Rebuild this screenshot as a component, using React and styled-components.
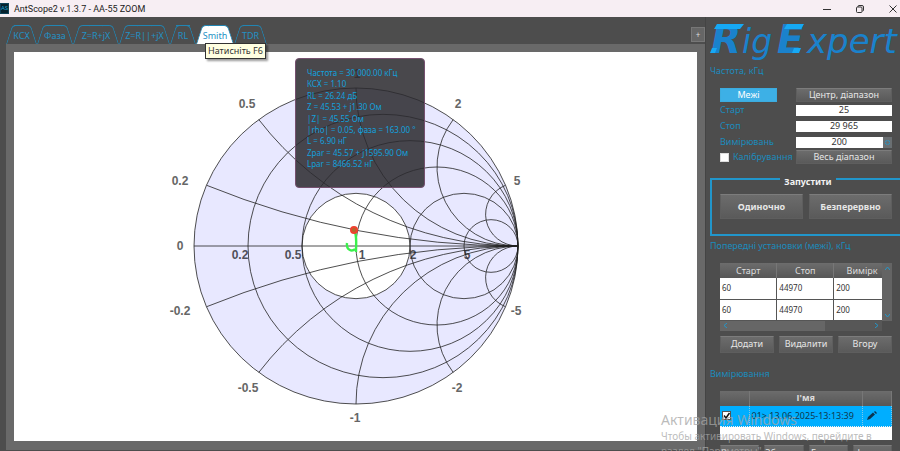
import React from 'react';
import styled, { createGlobalStyle } from 'styled-components';

const GlobalStyle = createGlobalStyle`
    * {
        box-sizing: border-box;
    }
    body {
        margin: 0;
        background: #4d4d4d;
        font-family: "Noto Sans", "Open Sans", sans-serif;
        font-size: 9px;
        line-height: 12px;
    }
    button, input {
        font: inherit;
        margin: 0;
    }
`
const Window = styled.div`
    display: flex;
    flex-direction: column;
    height: 100vh;
    overflow: hidden;
    position: relative;
`
const TitleBar = styled.header`
    display: flex;
    align-items: center;
    height: 17px;
    flex: none;
    background: #f7eef3;
    color: #222;
`
const AppIcon = styled.span`
    width: 9px;
    height: 11px;
    margin-right: 5px;
    background: #06222e;
    border: 1px solid #0e4258;
    color: #1aa5d8;
    font-size: 6px;
    line-height: 9px;
    text-align: center;
`
const Title = styled.h1`
    margin: 0;
    flex: 1;
    font-family: Roboto, sans-serif;
    font-size: 9px;
    font-weight: 400;
`
const WindowButton = styled.button`
    display: flex;
    justify-content: center;
    align-items: center;
    width: 33px;
    height: 17px;
    padding: 0;
    border: none;
    background: transparent;
    &:last-child {
        width: 34px;
        margin-right: -10px;
    }
`
const Body = styled.div`
    display: flex;
    flex: 1;
    min-height: 0;
`
const Main = styled.main`
    display: flex;
    flex-direction: column;
    flex: 1;
    min-width: 0;
    padding: 8px 0 1px 6px;
`
const TabBar = styled.nav`
    display: flex;
    height: 19px;
    flex: none;
`
const TabButton = styled.button`
    position: relative;
    z-index: 0;
    width: ${props => props.$width}px;
    padding: 2px 0 0;
    border: none;
    background: transparent;
    color: #2391c4;
    text-align: center;
    white-space: nowrap;
    &::before, &::after {
        content: "";
        position: absolute;
        z-index: -1;
        top: 0;
        bottom: 0;
        width: 51%;
        border-top: 1px solid #2185b3;
        background: ${props => props.$active ? '#fff' : 'transparent'};
        transform-origin: bottom;
    }
    &::before {
        left: 0;
        border-left: 1px solid #2185b3;
        border-top-left-radius: 4px;
        transform: skewX(-18deg);
    }
    &::after {
        right: 0;
        border-right: 1px solid #2185b3;
        border-top-right-radius: 4px;
        transform: skewX(18deg);
    }
`
const AddTab = styled.button`
    width: 14px;
    height: 15px;
    margin: 2px 0 0 auto;
    padding: 0;
    border: 1px solid #777;
    background: #666;
    color: #ddd;
    font-size: 8px;
    line-height: 12px;
`
const Frame = styled.section`
    display: flex;
    flex: 1;
    min-height: 0;
    padding: 8px 8px 9px;
    background: #696969;
`
const Canvas = styled.div`
    position: relative;
    flex: 1;
    background: #fff;
    svg {
        display: block;
        width: 100%;
        height: 100%;
    }
`
const Readout = styled.ul`
    position: absolute;
    left: 281px;
    top: 6px;
    width: 130px;
    height: 130px;
    display: flex;
    flex-direction: column;
    justify-content: space-between;
    margin: 0;
    padding: 8px 0 18px 11px;
    list-style: none;
    white-space: nowrap;
    background: rgba(43, 42, 46, 0.86);
    border: 1px solid #75506f;
    border-radius: 4px;
    color: #12a0dc;
    font-size: 8px;
    line-height: 11px;
`
const Tooltip = styled.div`
    position: absolute;
    left: 205px;
    top: 43px;
    padding: 1px 2px;
    background: #ffffe1;
    border: 1px solid #333;
    box-shadow: 2px 2px 2px rgba(0, 0, 0, 0.4);
    color: #333;
    font-size: 9px;
    white-space: nowrap;
`
const Side = styled.aside`
    width: 195px;
    flex: none;
    overflow: hidden;
    padding: 6px 8px 0 4px;
    border-left: 1px solid #444;
`
const Logo = styled.svg`
    display: block;
    width: 200px;
    height: 40px;
    overflow: visible;
`
const GroupTitle = styled.h2`
    margin: ${props => props.$top}px 0 0;
    color: #1b8bbd;
    font-size: 9px;
    font-weight: 400;
    line-height: 12px;
`
const RangeForm = styled.form`
    display: grid;
    grid-template-columns: 1fr 96px;
    grid-template-rows: 14px 16px 16px 16px 14px;
    align-items: center;
    margin: 11px 0 0 10px;
    color: #1b8bbd;
`
const Button = styled.button`
    height: ${props => props.$height || 14}px;
    padding: 0;
    overflow: hidden;
    border: 1px solid #5e5e5e;
    border-top-color: #7c7c7c;
    background: linear-gradient(#6c6c6c, #5a5a5a);
    color: #e6e6e6;
    font-weight: ${props => props.$bold ? 700 : 400};
    line-height: 12px;
    white-space: nowrap;
`
const ActiveButton = styled(Button)`
    width: 57px;
    border-color: #3cacdf;
    background: #3db0e6;
    color: #fff;
`
const NumberInput = styled.input`
    width: 100%;
    min-width: 0;
    height: 11px;
    padding: 0;
    border: none;
    border-radius: 0;
    background: #fff;
    color: #333;
    text-align: center;
`
const Spin = styled.div`
    display: flex;
    button {
        display: flex;
        align-items: center;
        width: 10px;
        height: 11px;
        padding: 0 2px;
        border: none;
        background: #6a6f72;
    }
`
const Calibration = styled.label`
    display: flex;
    align-items: center;
    gap: 4px;
    input {
        appearance: none;
        width: 9px;
        height: 9px;
        background: #fff;
        border: 1px solid #ddd;
    }
`
const Launch = styled.fieldset`
    display: grid;
    grid-template-columns: 83px 83px;
    gap: 6px;
    width: 196px;
    height: 66px;
    margin: 6px 0 0;
    padding: 6px 8px 0;
    border: 2px solid #2196cb;
    legend {
        margin: 0 auto;
        padding: 6px 4px 0;
        color: #f2f2f2;
        font-weight: 700;
        line-height: 12px;
    }
`
const PresetBox = styled.div`
    display: grid;
    grid-template-columns: 1fr 10px;
    margin: 11px 0 0 10px;
`
const PresetClip = styled.div`
    overflow: hidden;
    min-width: 0;
`
const Table = styled.table`
    width: ${props => props.$width};
    table-layout: fixed;
    border-collapse: collapse;
    color: #333;
    th {
        height: 15px;
        padding: 0;
        background: linear-gradient(#6c6c6c, #575757);
        border-right: 1px solid #777;
        color: #dcdcdc;
        font-weight: ${props => props.$bold ? 700 : 400};
        line-height: 12px;
    }
    td {
        height: 21px;
        padding: 0 2px;
        background: #fff;
        border-right: 1px solid #555;
        border-bottom: 1px solid #555;
        font-size: 8px;
    }
`
const VerticalBar = styled.div`
    display: flex;
    flex-direction: column;
    justify-content: space-between;
    align-items: center;
    padding: 3px 0;
    background: #646464;
`
const HorizontalBar = styled.div`
    display: flex;
    justify-content: space-between;
    align-items: center;
    height: 10px;
    padding: 0 3px;
    background: linear-gradient(90deg, #666 0 105px, #575757 105px);
`
const ButtonRow = styled.div`
    display: grid;
    grid-template-columns: repeat(${props => props.$count}, 1fr);
    gap: 5px;
    margin: ${props => props.$top}px 0 0 10px;
`
const Measurements = styled.div`
    margin: 11px 0 0 10px;
    height: 49px;
    background: #fff;
    td {
        background: #00aeff;
        border-right: 1px dotted #7fc8e8;
        border-bottom: 1px dotted #eee;
        color: #10394e;
        font-size: 9px;
    }
    td:last-child {
        padding-left: 4px;
    }
    td svg {
        display: block;
    }
    input {
        display: block;
        width: 9px;
        height: 9px;
        appearance: none;
        background: #fff;
        border: 1px solid #555;
    }
`
const CheckCell = styled.label`
    position: relative;
    display: block;
    width: 9px;
    svg {
        position: absolute;
        left: 0;
        top: 0;
    }
`
const Watermark = styled.div`
    position: absolute;
    left: 661px;
    top: 411px;
    color: rgba(165, 165, 165, 0.75);
    font-size: 10px;
    line-height: 15px;
    white-space: nowrap;
    pointer-events: none;
    strong {
        display: block;
        font-size: 14px;
        font-weight: 400;
        line-height: 18px;
    }
`

const TABS = [
    { name: 'КСХ', width: 31 },
    { name: 'Фаза', width: 36 },
    { name: 'Z=R+jX', width: 46 },
    { name: 'Z=R||+jX', width: 51 },
    { name: 'RL', width: 26 },
    { name: 'Smith', width: 38 },
    { name: 'TDR', width: 33 },
]

const READINGS = [
    'Частота = 30 000.00 кГц',
    'КСХ = 1.10',
    'RL = 26.24 дБ',
    'Z = 45.53 + j1.30 Ом',
    '|Z| = 45.55 Ом',
    '|rho| = 0.05, фаза = 163.00 °',
    'L = 6.90 нГ',
    'Zpar = 45.57 + j1595.90 Ом',
    'Lpar = 8466.52 нГ',
]

const CX = 342
const CY = 194
const RX = 162
const RY = 158
const VALUES = [0.2, 0.5, 1, 2, 5]

const RIM_LABELS = [
    ['0.5', 233, 56], ['1', 343, 26], ['2', 444, 56],
    ['0.2', 166, 133], ['5', 503, 133], ['0', 166, 198],
    ['-0.2', 166, 263], ['-5', 502, 263], ['-0.5', 234, 340],
    ['-2', 443, 340], ['-1', 341, 370],
]
const AXIS_LABELS = [
    ['0.2', 226], ['0.5', 279], ['1', 348], ['2', 399], ['5', 453],
]

// reactance arc from the rim to the open-circuit point
function arcPath(x, sign) {
    const d = x * x + 1
    const px = CX + RX * (x * x - 1) / d
    const py = CY - sign * RY * 2 * x / d
    return `M${px} ${py}A${RX / x} ${RY / x} 0 0 ${sign > 0 ? 0 : 1} ${CX + RX} ${CY}`
}

function SmithChart() {
    return (
        <svg viewBox="0 0 683 389" role="img" aria-label="Smith">
            <ellipse cx={CX} cy={CY} rx={RX} ry={RY} fill="#e8e8ff" />
            <ellipse cx={CX} cy={CY} rx={RX / 3} ry={RY / 3} fill="#fff" />
            <g fontFamily="Liberation Sans, Arial, sans-serif" fontSize="12" fontWeight="700" textAnchor="middle">
                <g fill="#666">
                    {RIM_LABELS.map(([text, x, y]) => <text key={text} x={x} y={y}>{text}</text>)}
                </g>
                <g fill="#50505a">
                    {AXIS_LABELS.map(([text, x]) => <text key={text} x={x} y="207">{text}</text>)}
                </g>
            </g>
            <g fill="none" stroke="#222" strokeWidth="0.8">
                <ellipse cx={CX} cy={CY} rx={RX} ry={RY} />
                <ellipse cx={CX} cy={CY} rx={RX / 3} ry={RY / 3} />
                {VALUES.map(r => (
                    <ellipse key={r} cx={CX + RX * r / (r + 1)} cy={CY} rx={RX / (r + 1)} ry={RY / (r + 1)} />
                ))}
                {VALUES.map(x => <path key={x} d={arcPath(x, 1)} />)}
                {VALUES.map(x => <path key={x} d={arcPath(x, -1)} />)}
                <path d={`M${CX - RX} ${CY}H${CX + RX}`} />
            </g>
            <path d="M333 191C332 198 338 200 341 197M341 180C343 186 342 193 342 200" fill="none" stroke="#3bf04c" strokeWidth="2.4" />
            <circle cx="340" cy="178" r="3" fill="#b06a2c" stroke="#f0412f" strokeWidth="2" />
        </svg>
    )
}

function Arrow({ d }) {
    return (
        <svg width="5" height="5" viewBox="0 0 5 5" fill="none" stroke="#2497c9" aria-hidden="true">
            <path d={d} />
        </svg>
    )
}

function SideLogo() {
    return (
        <Logo viewBox="0 0 200 40" role="img" aria-label="RigExpert">
            <g fill="#1a82cc" fontFamily="DejaVu Sans, sans-serif" fontStyle="italic">
                <text x="1" y="30" fontSize="39" fontWeight="700">R</text>
                <text x="32" y="30" fontSize="33">ig</text>
                <text x="67" y="30" fontSize="39" fontWeight="700">E</text>
                <text x="97" y="30" fontSize="34">xpert</text>
            </g>
            <path d="M7 1H34L30 6H4ZM2 25H7L5 30H0ZM77 1H94L91 6H74ZM84 25H91L89 30H82Z" fill="#16a9f5" />
        </Logo>
    )
}

class App extends React.Component {
    render() {
        return (
            <Window>
                <GlobalStyle />
                <TitleBar>
                    <AppIcon>AS</AppIcon>
                    <Title>AntScope2 v.1.3.7 - AA-55 ZOOM</Title>
                    <WindowButton aria-label="Minimize">
                        <svg width="8" height="8" stroke="#333"><path d="M0 4.500H8" /></svg>
                    </WindowButton>
                    <WindowButton aria-label="Restore">
                        <svg width="8" height="8" fill="none" stroke="#333">
                            <rect x="0.5" y="2" width="5.500" height="5.500" rx="1" />
                            <path d="M2 2V1.500Q2 .5 3 .5H6Q7.500 .5 7.500 2V5Q7.500 6 6.500 6" />
                        </svg>
                    </WindowButton>
                    <WindowButton aria-label="Close">
                        <svg width="8" height="8" stroke="#333"><path d="M.5 .5L7.500 7.500M7.500 .5L.5 7.500" /></svg>
                    </WindowButton>
                </TitleBar>
                <Body>
                    <Main>
                        <TabBar>
                            {TABS.map(tab => (
                                <TabButton key={tab.name} $width={tab.width} $active={tab.name === 'Smith'}>
                                    {tab.name}
                                </TabButton>
                            ))}
                            <AddTab>+</AddTab>
                        </TabBar>
                        <Frame>
                            <Canvas>
                                <SmithChart />
                                <Readout>
                                    {READINGS.map(line => <li key={line}>{line}</li>)}
                                </Readout>
                            </Canvas>
                        </Frame>
                    </Main>
                    <Side>
                        <SideLogo />
                        <GroupTitle $top={2}>Частота, кГц</GroupTitle>
                        <RangeForm>
                            <ActiveButton type="button">Межі</ActiveButton>
                            <Button type="button">Центр, діапазон</Button>
                            <label htmlFor="start">Старт</label>
                            <NumberInput id="start" defaultValue="25" />
                            <label htmlFor="stop">Стоп</label>
                            <NumberInput id="stop" defaultValue="29 965" />
                            <label htmlFor="points">Вимірювань</label>
                            <Spin>
                                <NumberInput id="points" defaultValue="200" />
                                <button type="button" aria-label="Вимірювань"><Arrow d="M0 2L2.500 0L5 2M0 3L2.500 5L5 3" /></button>
                            </Spin>
                            <Calibration><input type="checkbox" />Калібрування</Calibration>
                            <Button type="button">Весь діапазон</Button>
                        </RangeForm>
                        <Launch>
                            <legend>Запустити</legend>
                            <Button $height={25} $bold>Одиночно</Button>
                            <Button $height={25} $bold>Безперервно</Button>
                        </Launch>
                        <GroupTitle $top={4}>Попередні установки (межі), кГц</GroupTitle>
                        <PresetBox>
                            <PresetClip>
                                <Table $width="171px">
                                    <thead>
                                        <tr><th>Старт</th><th>Стоп</th><th>Вимірк</th></tr>
                                    </thead>
                                    <tbody>
                                        <tr><td>60</td><td>44970</td><td>200</td></tr>
                                        <tr><td>60</td><td>44970</td><td>200</td></tr>
                                    </tbody>
                                </Table>
                            </PresetClip>
                            <VerticalBar>
                                <Arrow d="M0 4L2.500 1L5 4" />
                                <Arrow d="M0 1L2.500 4L5 1" />
                            </VerticalBar>
                            <HorizontalBar>
                                <Arrow d="M4 0L1 2.500L4 5" />
                                <Arrow d="M1 0L4 2.500L1 5" />
                            </HorizontalBar>
                        </PresetBox>
                        <ButtonRow $count={3} $top={5}>
                            <Button $height={17}>Додати</Button>
                            <Button $height={17}>Видалити</Button>
                            <Button $height={17}>Вгору</Button>
                        </ButtonRow>
                        <GroupTitle $top={15}>Вимірювання</GroupTitle>
                        <Measurements>
                            <Table $width="100%" $bold>
                                <colgroup><col width="29" /><col /><col width="29" /></colgroup>
                                <thead>
                                    <tr><th></th><th>І'мя</th><th></th></tr>
                                </thead>
                                <tbody>
                                    <tr>
                                        <td>
                                            <CheckCell>
                                                <input type="checkbox" aria-label="01" defaultChecked />
                                                <svg width="9" height="9" fill="none" stroke="#111" strokeWidth="1.500"><path d="M2 4.500L4 7L7.500 2" /></svg>
                                            </CheckCell>
                                        </td>
                                        <td>01&gt; 13.06.2025-13:13:39</td>
                                        <td>
                                            <svg width="10" height="10" fill="#0b3550"><path d="M0 9L1 6L6 1.500L8 3.500L3 8ZM7 1L8 0L10 2L9 3Z" /></svg>
                                        </td>
                                    </tr>
                                </tbody>
                            </Table>
                        </Measurements>
                        <ButtonRow $count={4} $top={5}>
                            <Button $height={17}>Видалити</Button>
                            <Button $height={17}>Зберегти</Button>
                            <Button $height={17}>Експорт</Button>
                            <Button $height={17}>Імпорт</Button>
                        </ButtonRow>
                    </Side>
                </Body>
                <Tooltip role="tooltip">Натисніть F6</Tooltip>
                <Watermark>
                    <strong>Активация Windows</strong>
                    Чтобы активировать Windows, перейдите в<br />
                    раздел "Параметры".
                </Watermark>
            </Window>
        );
    }
}

export default App
